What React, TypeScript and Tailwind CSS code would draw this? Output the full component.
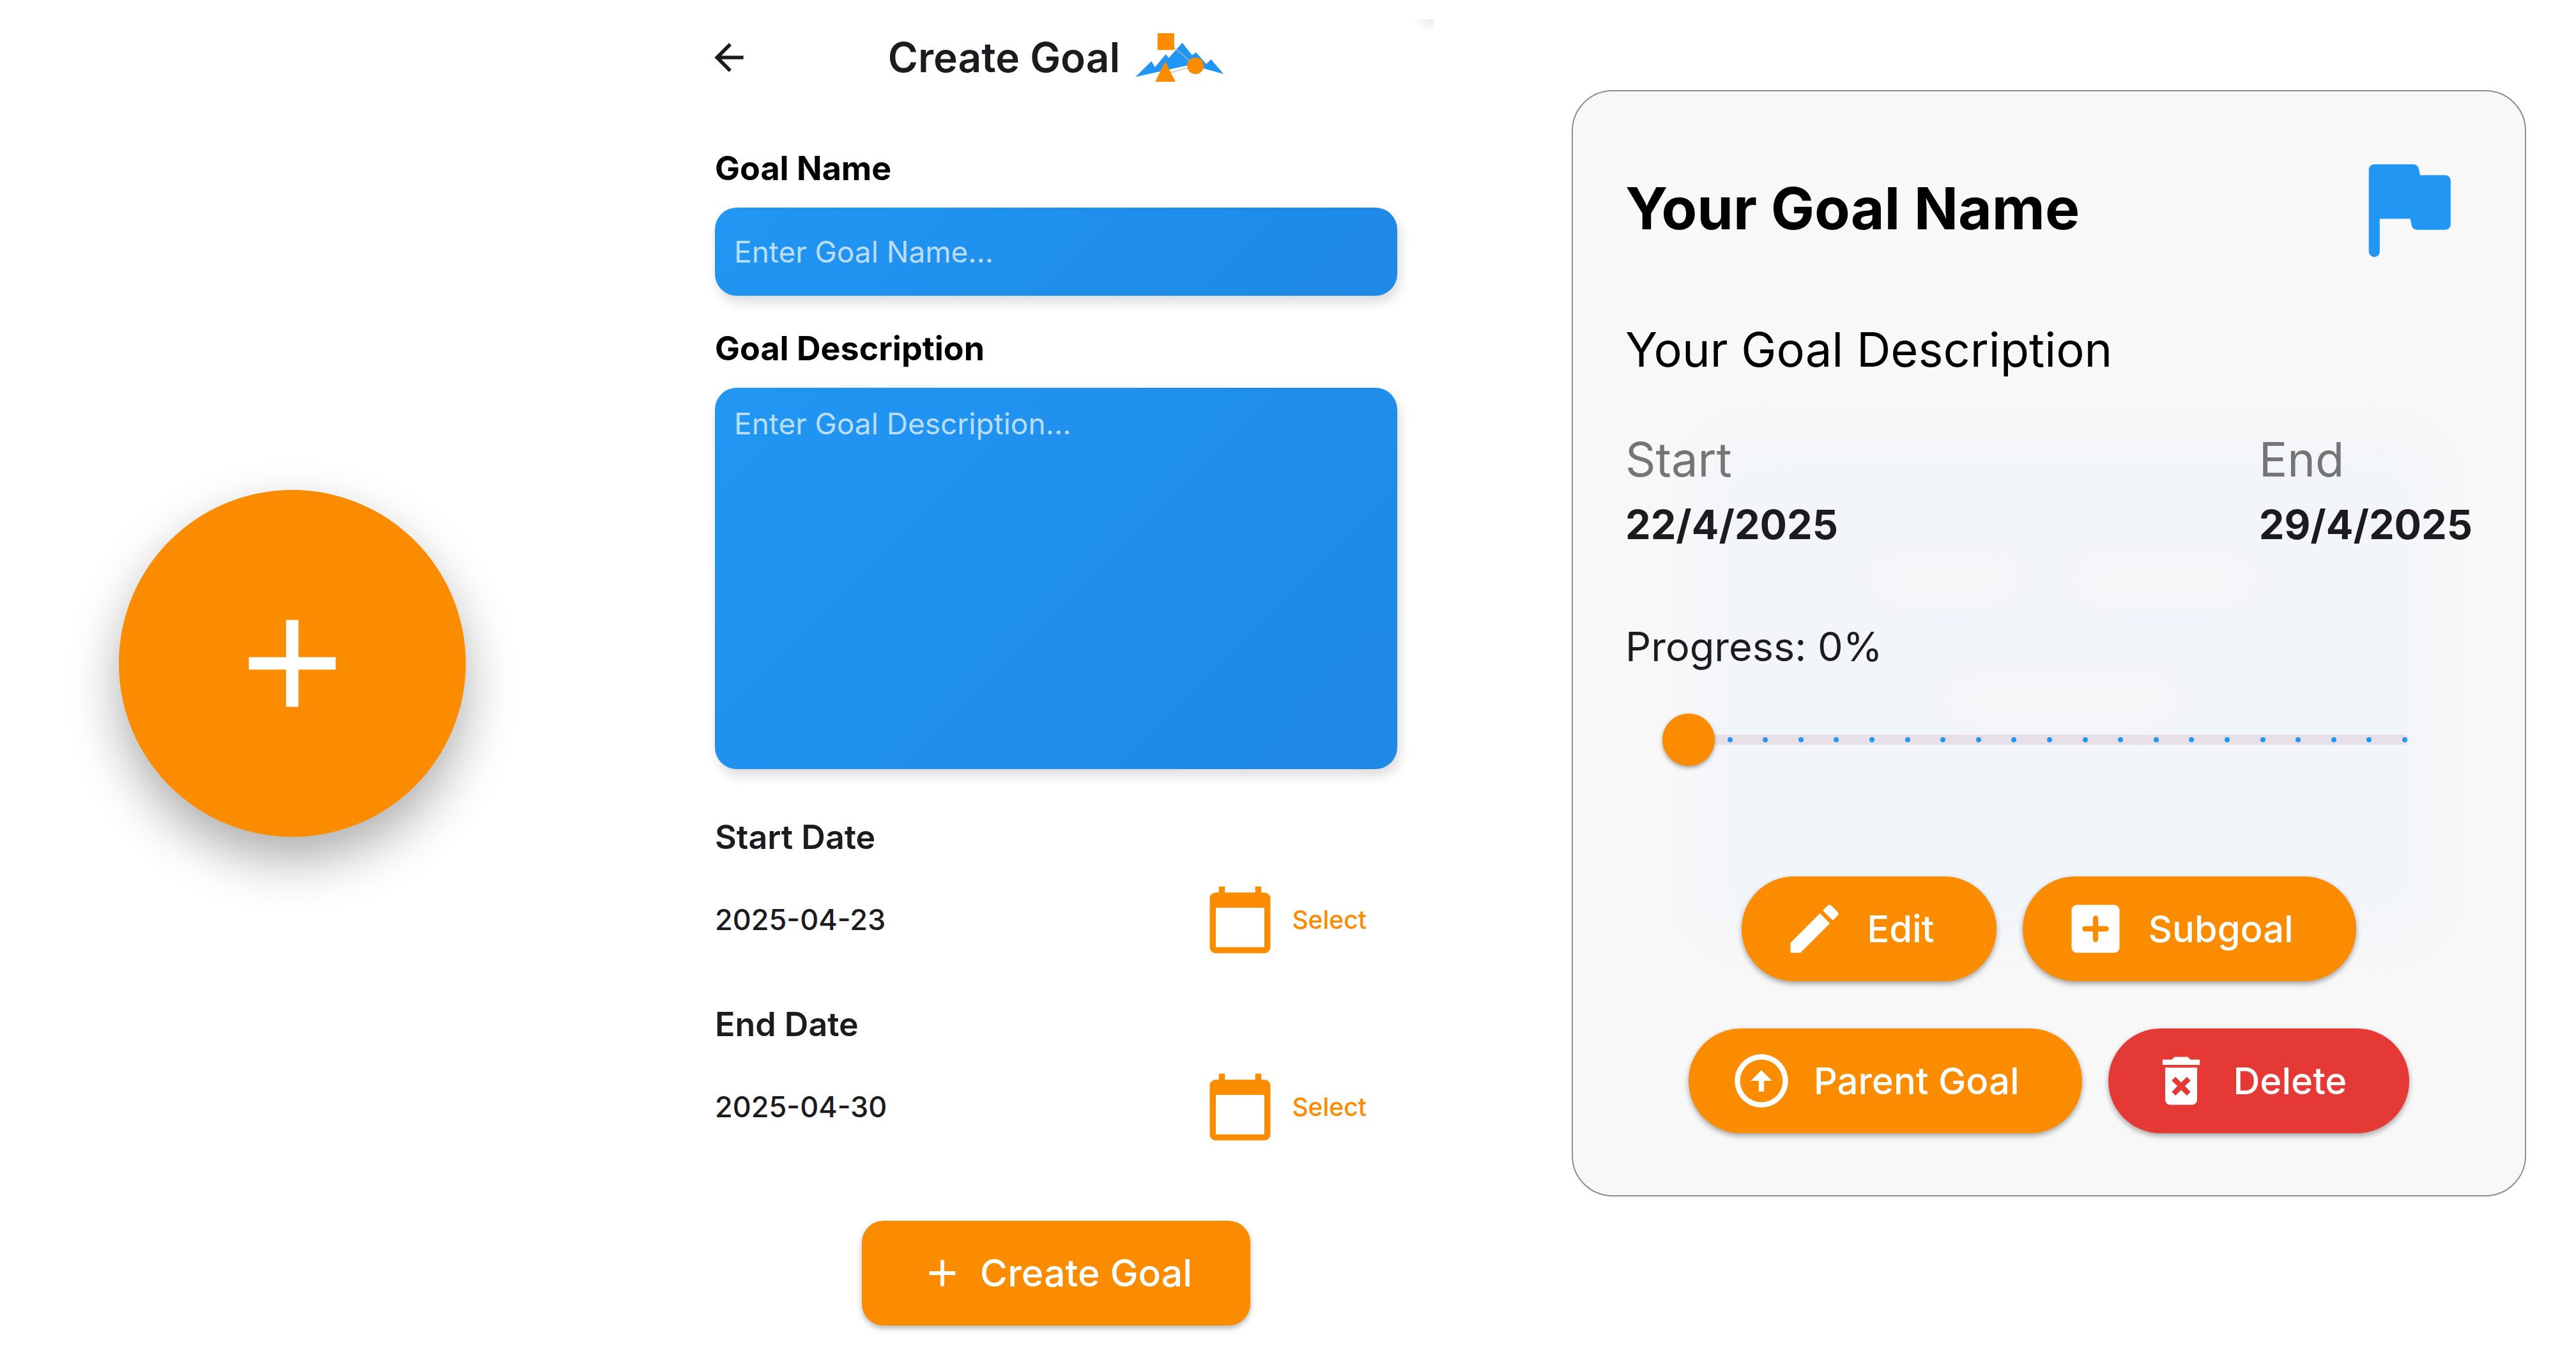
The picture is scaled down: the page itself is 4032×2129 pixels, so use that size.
import { useState } from "react";
import type { ReactNode } from "react";

const ICONS = {
  add: "M19 13h-6v6h-2v-6H5v-2h6V5h2v6h6v2z",
  back: "M20 11H7.83l5.59-5.59L12 4l-8 8 8 8 1.41-1.41L7.83 13H20v-2z",
  calendar:
    "M20 3h-1V1h-2v2H7V1H5v2H4c-1.1 0-2 .9-2 2v16c0 1.1.9 2 2 2h16c1.1 0 2-.9 2-2V5c0-1.1-.9-2-2-2zm0 18H4V8h16v13z",
  flag: "M14.4 6l-.24-1.2c-.09-.46-.5-.8-.98-.8H6c-.55 0-1 .45-1 1v15c0 .55.45 1 1 1s1-.45 1-1v-6h5.6l.24 1.2c.09.47.5.8.98.8H19c.55 0 1-.45 1-1V7c0-.55-.45-1-1-1h-4.6z",
  edit: "M3 17.25V21h3.75L17.81 9.94l-3.75-3.75L3 17.25zM20.71 7.04c.39-.39.39-1.02 0-1.41l-2.34-2.34c-.39-.39-1.02-.39-1.41 0l-1.83 1.83 3.75 3.75 1.83-1.83z",
  addBox:
    "M19 3H5c-1.11 0-2 .9-2 2v14c0 1.1.89 2 2 2h14c1.1 0 2-.9 2-2V5c0-1.1-.9-2-2-2zm-3 10h-3v3c0 .55-.45 1-1 1s-1-.45-1-1v-3H8c-.55 0-1-.45-1-1s.45-1 1-1h3V8c0-.55.45-1 1-1s1 .45 1 1v3h3c.55 0 1 .45 1 1s-.45 1-1 1z",
  up: "M12 20c-4.41 0-8-3.59-8-8s3.59-8 8-8 8 3.59 8 8-3.59 8-8 8m0 2c5.52 0 10-4.48 10-10S17.52 2 12 2 2 6.48 2 12s4.48 10 10 10zm-1-10v4h2v-4h3l-4-4-4 4h3z",
  trash:
    "M6 19c0 1.1.9 2 2 2h8c1.1 0 2-.9 2-2V7H6v12zm2.46-7.12l1.41-1.41L12 12.59l2.12-2.12 1.41 1.41L13.41 14l2.12 2.12-1.41 1.41L12 15.41l-2.12 2.12-1.41-1.41L10.59 14l-2.13-2.12zM15.5 4l-1-1h-5l-1 1H5v2h14V4z",
};

function Icon({ name, className }: { name: keyof typeof ICONS; className: string }) {
  return (
    <svg viewBox="0 0 24 24" fill="currentColor" aria-hidden="true" className={`shrink-0 ${className}`}>
      <path d={ICONS[name]} />
    </svg>
  );
}

function MountainLogo() {
  return (
    <svg viewBox="100 60 416 240" aria-hidden="true" className="h-20 w-[139px] shrink-0">
      <path
        fill="#2196f3"
        d="M101 271 175 197 192 226 243 164 256 182 320 111 366 169 385 156 433 211 455 188 514 257 418 231 350 216Z"
      />
      <path stroke="#b8b8b8" strokeWidth="4" fill="none" d="M280 132 355 196M266 251 348 227" />
      <path fill="#fb8c00" d="M204 66H282V145H204ZM240 198 288 294H193Z" />
      <circle cx="382" cy="219" r="39" fill="#fb8c00" />
    </svg>
  );
}

const FIELD =
  "block w-full resize-none rounded-[34px] bg-linear-[135deg,#2196f3,#1e88e5] px-[30px] text-[46px] leading-[56px] text-white shadow-[4px_10px_18px_rgba(0,0,0,0.14)] outline-none placeholder:text-white/70 placeholder:opacity-100";

function DateRow({ label, value }: { label: string; value: string }) {
  return (
    <div>
      <h3 className="text-[52px] leading-[64px] font-semibold">{label}</h3>
      <div className="mt-10 flex items-center justify-between pr-12">
        <span className="text-[45px] leading-[56px] font-medium">{value}</span>
        <button type="button" className="flex items-center gap-6 text-[39px] leading-[48px] font-medium text-[#fb8c00]">
          <Icon name="calendar" className="size-[114px]" />
          Select
        </button>
      </div>
    </div>
  );
}

function Pill({ icon, color, children }: { icon: keyof typeof ICONS; color: string; children: ReactNode }) {
  return (
    <button
      type="button"
      className={`flex h-[164px] items-center gap-8 rounded-full pr-[98px] pl-16 text-[58px] leading-[64px] font-medium text-white shadow-[0_4px_8px_rgba(0,0,0,0.35)] ${color}`}
    >
      <Icon name={icon} className="size-[100px]" />
      {children}
    </button>
  );
}

function DateStat({ label, value }: { label: string; value: string }) {
  return (
    <div>
      <dt className="text-[74px] leading-[88px] text-[#757575]">{label}</dt>
      <dd className="mt-[18px] text-[63px] leading-[80px] font-bold">{value}</dd>
    </div>
  );
}

function CreateGoalForm() {
  return (
    <form className="relative px-[204px] pt-[38px] text-[#1d1b20]" onSubmit={(e) => e.preventDefault()}>
      <span className="absolute top-[30px] right-[147px] h-5 w-9 bg-radial-[at_100%_0%] from-black/8 to-transparent to-70%" />
      <header className="grid h-[104px] grid-cols-[1fr_auto_1fr] items-center">
        <button type="button" aria-label="Back" className="-ml-3 justify-self-start">
          <Icon name="back" className="size-[68px]" />
        </button>
        <h1 className="flex items-center gap-6 text-[64px] leading-[80px] font-semibold">
          Create Goal
          <MountainLogo />
        </h1>
      </header>

      <label htmlFor="goal-name" className="mt-[90px] block text-[52px] leading-[64px] font-bold text-black">
        Goal Name
      </label>
      <input id="goal-name" type="text" placeholder="Enter Goal Name..." className={`mt-[29px] h-[138px] ${FIELD}`} />

      <label htmlFor="goal-description" className="mt-[51px] block text-[52px] leading-[64px] font-bold text-black">
        Goal Description
      </label>
      <textarea
        id="goal-description"
        placeholder="Enter Goal Description..."
        className={`mt-[29px] h-[597px] py-7 ${FIELD}`}
      />

      <div className="mt-[75px] flex flex-col gap-[75px]">
        <DateRow label="Start Date" value="2025-04-23" />
        <DateRow label="End Date" value="2025-04-30" />
      </div>

      <div className="mt-[121px] flex justify-center">
        <button
          type="submit"
          className="flex h-[164px] items-center gap-6 rounded-[34px] bg-[#fb8c00] px-[91px] text-[59px] leading-[64px] font-medium text-white shadow-[0_4px_8px_rgba(0,0,0,0.3)]"
        >
          <Icon name="add" className="size-[70px]" />
          Create Goal
        </button>
      </div>
    </form>
  );
}

function ProgressSlider({ value, onChange }: { value: number; onChange: (v: number) => void }) {
  return (
    <div className="relative mx-[58px] flex h-24 items-center">
      <div className="mr-[42px] ml-11 flex h-4 grow items-center justify-between rounded-full bg-[#e7e0e8] px-0.5">
        {Array.from({ length: 21 }, (_, i) => (
          <span key={i} className="size-2 rounded-full bg-[#2196f3]" />
        ))}
      </div>
      <input
        id="progress"
        type="range"
        min={0}
        max={100}
        step={5}
        value={value}
        onChange={(e) => onChange(Number(e.target.value))}
        className="absolute inset-0 w-full appearance-none bg-transparent [&::-webkit-slider-thumb]:size-[82px] [&::-webkit-slider-thumb]:appearance-none [&::-webkit-slider-thumb]:rounded-full [&::-webkit-slider-thumb]:bg-[#fb8c00] [&::-webkit-slider-thumb]:shadow-[0_3px_6px_rgba(0,0,0,0.35)]"
      />
    </div>
  );
}

function GoalCard() {
  const [progress, setProgress] = useState(0);
  return (
    <article className="relative isolate rounded-[64px] border-2 border-[#8e8e8e] bg-[#f8f8f8] px-[82px] pt-20 pb-[97px] text-[#1d1b20]">
      <div className="absolute top-[540px] right-[140px] bottom-[400px] left-[200px] -z-10 rounded-[80px] bg-[#f2f5f9] blur-[28px]" />
      <div className="absolute top-[730px] left-[470px] -z-10 h-16 w-56 rounded-full bg-[#f6f7f8] blur-[20px]" />
      <div className="absolute top-[730px] left-[790px] -z-10 h-16 w-68 rounded-full bg-[#f6f7f8] blur-[20px]" />
      <div className="absolute top-[920px] left-[590px] -z-10 h-16 w-88 rounded-full bg-[#f6f7f8] blur-[20px]" />

      <header className="flex items-center justify-between">
        <h2 className="text-[91px] leading-[112px] font-bold text-black">Your Goal Name</h2>
        <Icon name="flag" className="size-[205px] text-[#2196f3]" />
      </header>
      <p className="mt-[75px] text-[74px] leading-[88px] text-black">Your Goal Description</p>
      <dl className="mt-[84px] flex justify-between">
        <DateStat label="Start" value="22/4/2025" />
        <DateStat label="End" value="29/4/2025" />
      </dl>
      <label htmlFor="progress" className="mt-[111px] mb-[58px] block text-[63px] leading-[80px]">
        Progress: {progress}%
      </label>
      <ProgressSlider value={progress} onChange={setProgress} />
      <div className="mt-[166px] flex flex-col gap-[74px]">
        <div className="flex justify-center gap-[41px]">
          <Pill icon="edit" color="bg-[#fb8c00]">Edit</Pill>
          <Pill icon="addBox" color="bg-[#fb8c00]">Subgoal</Pill>
        </div>
        <div className="flex justify-center gap-[41px]">
          <Pill icon="up" color="bg-[#fb8c00]">Parent Goal</Pill>
          <Pill icon="trash" color="bg-[#e53935]">Delete</Pill>
        </div>
      </div>
    </article>
  );
}

export default function App() {
  return (
    <main className="grid min-h-screen grid-cols-[915fr_1476fr_1641fr] bg-white font-['Inter','Liberation_Sans',sans-serif]">
      <div className="flex items-start justify-center pt-[767px]">
        <button
          type="button"
          aria-label="Add goal"
          className="flex size-[543px] items-center justify-center rounded-full bg-[#fb8c00] text-white shadow-[0_36px_80px_rgba(0,0,0,0.32)]"
        >
          <Icon name="add" className="size-[233px]" />
        </button>
      </div>
      <CreateGoalForm />
      <div className="pt-[141px] pr-[78px] pl-[69px]">
        <GoalCard />
      </div>
    </main>
  );
}
